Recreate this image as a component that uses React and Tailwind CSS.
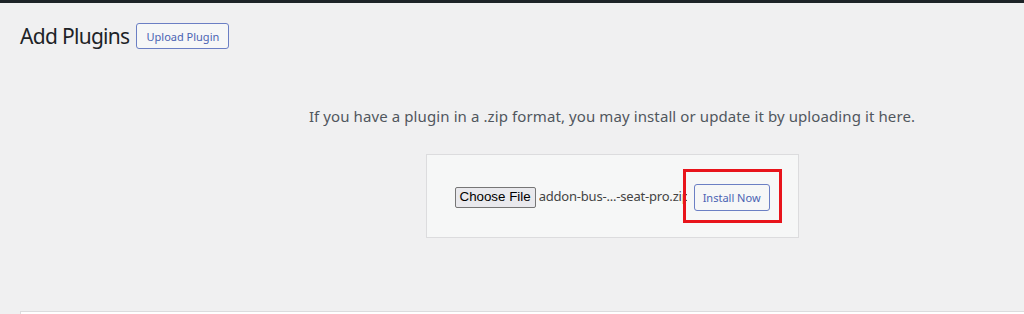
export default function App() {
  const font = { fontFamily: '"Noto Sans", "Open Sans", sans-serif' };
  return (
    <div className="w-[1024px] h-[314px] overflow-hidden bg-[#f0f0f1] flex flex-col" style={font}>
      <div className="h-[3px] bg-[#1d2327] shrink-0" />
      <div className="flex items-center gap-[7px] pl-[20px] pt-[18px]">
        <h1 className="text-[21px] leading-[30px] text-[#1d2327] font-normal tracking-[-0.7px]">Add Plugins</h1>
        <button className="h-[26px] px-[9px] border border-[#6b7fc4] rounded-[3px] bg-[#f6f7f7] text-[11px] text-[#4a63b3] leading-none">
          Upload Plugin
        </button>
      </div>
      <div className="flex flex-col items-center pl-[200px] pt-[55px]">
        <p className="text-[15px] leading-[20px] text-[#50575e] tracking-[0.1px]">
          If you have a plugin in a .zip format, you may install or update it by uploading it here.
        </p>
        <div className="mt-[28px] w-[373px] h-[84px] border border-[#dcdcde] bg-[#f6f7f7] flex items-center pl-[28px] pt-[2px]">
          <button
            className="h-[21px] px-[4px] border border-[#767676] rounded-[2px] bg-[#e9e9ed] text-[13.33px] text-black leading-none"
            style={{ fontFamily: '"Liberation Sans", Arial, sans-serif' }}
          >
            Choose File
          </button>
          <span className="ml-[3px] w-[148px] overflow-hidden whitespace-nowrap text-[13px] text-[#444] tracking-[-0.2px]">
            addon-bus-...-seat-pro.zip
          </span>
          <div className="relative ml-[7px]">
            <button className="h-[27px] px-[8px] border border-[#6b7fc4] rounded-[3px] bg-[#f6f7f7] text-[11px] text-[#4a63b3] leading-none">
              Install Now
            </button>
            <div className="absolute left-[-11px] top-[-15px] w-[99px] h-[54px] border-[3px] border-[#e8141b]" />
          </div>
        </div>
      </div>
      <div className="flex-1" />
      <div className="ml-[20px] h-[3px] bg-white border-t border-l border-[#dcdcde] shrink-0" />
    </div>
  );
}
